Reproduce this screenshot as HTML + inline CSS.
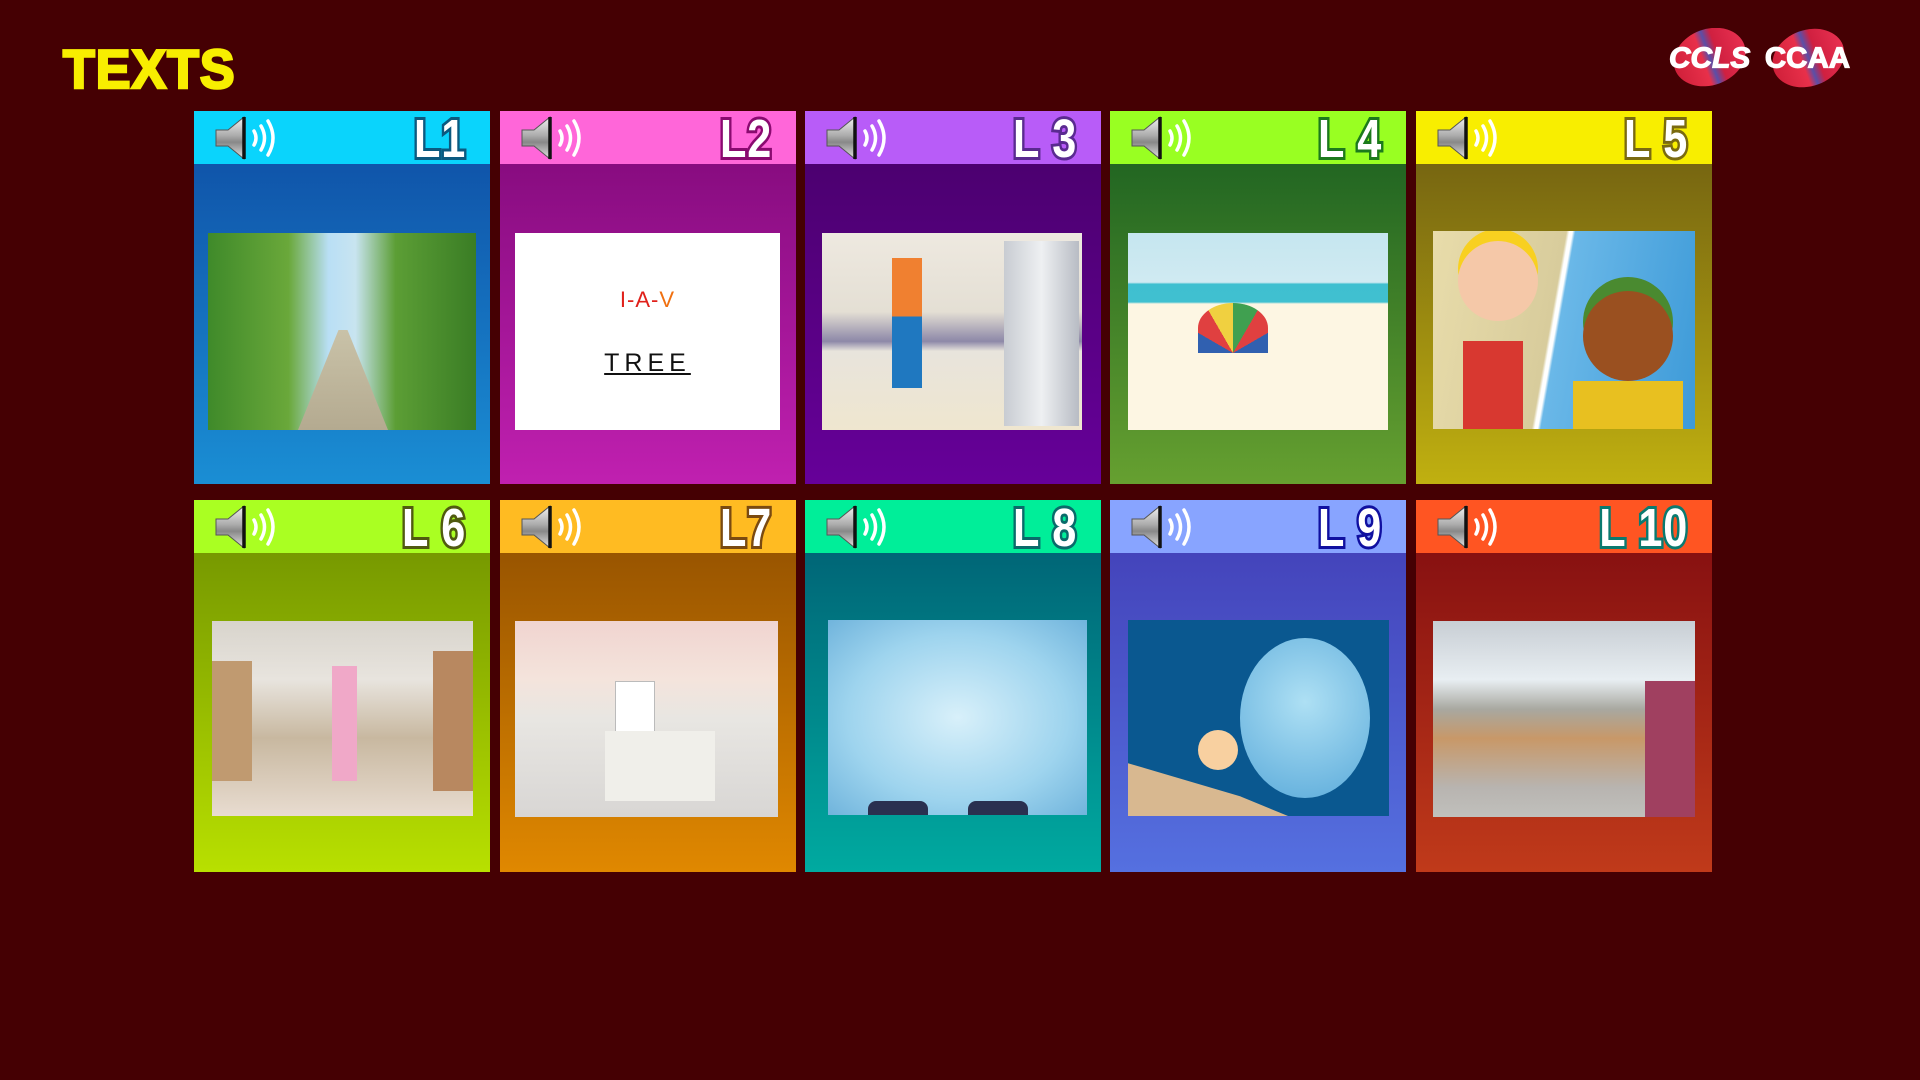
<!DOCTYPE html>
<html><head><meta charset="utf-8">
<style>
*{margin:0;padding:0;box-sizing:border-box}
body{width:1920px;height:1080px;background:#450003;position:relative;overflow:hidden;font-family:"Liberation Sans",sans-serif}
.title{position:absolute;left:63px;top:40px;font-size:52px;font-weight:bold;color:#f8ee00;letter-spacing:1px;-webkit-text-stroke:2.5px #f8ee00;transform:scaleY(1.05)}
.card{position:absolute;width:296px}
.hd{height:53px;position:relative}
.bd{position:absolute;top:53px;left:0;right:0;bottom:0}
.spk{position:absolute;left:20px;top:4px}
.lab{position:absolute;right:24px;top:-3px;font-size:54px;font-weight:bold;color:#fff;transform:scaleX(0.8);transform-origin:right center;letter-spacing:1px;paint-order:stroke fill;-webkit-text-stroke:6px var(--c)}
.img{position:absolute;overflow:hidden}
.logo{position:absolute;top:28px;height:62px}
</style></head><body>
<div class="title">TEXTS</div>

<svg class="logo" style="left:1660px" width="200" height="64" viewBox="0 0 200 64">
<defs><linearGradient id="rb" x1="0" x2="1"><stop offset="0" stop-color="#d0203a"/><stop offset="0.4" stop-color="#e8304a"/><stop offset="0.5" stop-color="#5a4fa8"/><stop offset="0.62" stop-color="#d02040"/><stop offset="1" stop-color="#e83050"/></linearGradient></defs>
<ellipse cx="48" cy="30" rx="38" ry="29" fill="url(#rb)" transform="rotate(-20 48 30)"/>
<ellipse cx="150" cy="31" rx="38" ry="29" fill="url(#rb)" transform="rotate(-20 150 31)"/>
<text x="6" y="41" font-family="Liberation Sans" font-weight="bold" font-style="italic" font-size="30" fill="#fff" stroke="#fff" stroke-width="1.2" textLength="84" lengthAdjust="spacingAndGlyphs">CCLS</text>
<text x="105" y="41" font-family="Liberation Sans" font-weight="bold" font-size="30" fill="#fff" stroke="#fff" stroke-width="1.2" textLength="88" lengthAdjust="spacingAndGlyphs">CCAA</text>
</svg>

<svg width="0" height="0" style="position:absolute">
<defs>
<linearGradient id="sg" x1="0" y1="0" x2="0" y2="1"><stop offset="0" stop-color="#f4f4f4"/><stop offset="0.45" stop-color="#aaa"/><stop offset="0.6" stop-color="#888"/><stop offset="1" stop-color="#e4e4e4"/></linearGradient>
<symbol id="speaker" viewBox="0 0 66 46">
<path d="M2 15 H14 L30 2 V44 L14 31 H2 Z" fill="url(#sg)" stroke="#555" stroke-width="1"/>
<path d="M30 2 V44" stroke="#111" stroke-width="3.5"/>
<path d="M40 16 Q44 23 40 30" stroke="#fff" stroke-width="3.5" fill="none" stroke-linecap="round"/>
<path d="M47 11 Q54 23 47 35" stroke="#fff" stroke-width="3.5" fill="none" stroke-linecap="round"/>
<path d="M54 6 Q64 23 54 40" stroke="#fff" stroke-width="3.5" fill="none" stroke-linecap="round"/>
</symbol>
</defs></svg>

<!-- Row 1 -->
<div class="card" style="left:194px;top:111px;height:373px">
<div class="hd" style="background:#0ad4fc"><svg class="spk" width="66" height="46"><use href="#speaker"/></svg><div class="lab" style="--c:#0b5a80">L1</div></div>
<div class="bd" style="background:linear-gradient(#1055aa,#1a8ed4)"></div>
<div class="img" style="left:14px;top:122px;width:268px;height:197px;background:linear-gradient(90deg,#3f8a2a 0%,#6aa83a 30%,#b9dff5 45%,#c8e4f0 55%,#5c9e35 70%,#3a7d25 100%)"><div style="position:absolute;left:90px;bottom:0;width:90px;height:100px;background:linear-gradient(#c9c2a8,#b4aa90);clip-path:polygon(45% 0,55% 0,100% 100%,0 100%)"></div></div>
</div>
<div class="card" style="left:500px;top:111px;height:373px">
<div class="hd" style="background:#ff66d9"><svg class="spk" width="66" height="46"><use href="#speaker"/></svg><div class="lab" style="--c:#8a0a70">L2</div></div>
<div class="bd" style="background:linear-gradient(#880c80,#c020b0)"></div>
<div class="img" style="left:15px;top:122px;width:265px;height:197px;background:#fff;text-align:center">
<div style="margin-top:54px;font-size:22px;color:#e0201a;letter-spacing:1px">I-A-<span style="color:#f07010">V</span></div>
<div style="margin-top:36px;font-size:25px;color:#111;letter-spacing:5px;text-decoration:underline">TREE</div>
</div>
</div>
<div class="card" style="left:805px;top:111px;height:373px">
<div class="hd" style="background:#b85cf8"><svg class="spk" width="66" height="46"><use href="#speaker"/></svg><div class="lab" style="--c:#5a2a90">L 3</div></div>
<div class="bd" style="background:linear-gradient(#4c0070,#660099)"></div>
<div class="img" style="left:17px;top:122px;width:260px;height:197px;background:linear-gradient(#eee9e0 0%,#e4dfd4 40%,#8d88a8 55%,#e8e4dc 60%,#efe6cf 100%)"><div style="position:absolute;right:3px;top:8px;width:75px;height:185px;background:linear-gradient(90deg,#c8ccd2,#eef0f2,#b8bcc4)"></div><div style="position:absolute;left:70px;top:25px;width:30px;height:130px;background:linear-gradient(#f08030 0 45%,#1f78c0 45%)"></div></div>
</div>
<div class="card" style="left:1110px;top:111px;height:373px">
<div class="hd" style="background:#99ff22"><svg class="spk" width="66" height="46"><use href="#speaker"/></svg><div class="lab" style="--c:#1c7a1c">L 4</div></div>
<div class="bd" style="background:linear-gradient(#226622,#66a030)"></div>
<div class="img" style="left:18px;top:122px;width:260px;height:197px;background:linear-gradient(#c5e6ef 0%,#d0eaf2 25%,#3fbfd0 26%,#40c0d0 35%,#fdf6e3 36%)"><div style="position:absolute;left:70px;top:70px;width:70px;height:50px;border-radius:50% 50% 0 0;background:conic-gradient(from 270deg at 50% 100%,#3060b0 0 30deg,#e04040 0 60deg,#f0d040 0 90deg,#40a050 0 120deg,#e04040 0 150deg,#3060b0 0 180deg,transparent 0)"></div></div>
</div>
<div class="card" style="left:1416px;top:111px;height:373px">
<div class="hd" style="background:#f8ee00"><svg class="spk" width="66" height="46"><use href="#speaker"/></svg><div class="lab" style="--c:#7a6a10">L 5</div></div>
<div class="bd" style="background:linear-gradient(#776611,#c0b010)"></div>
<div class="img" style="left:17px;top:120px;width:262px;height:198px;background:linear-gradient(100deg,#e8dcaa 0%,#d8cc9c 45%,#fff 46%,#fff 47%,#6ab8e8 48%,#3d9ad8 100%)"><div style="position:absolute;left:25px;top:10px;width:80px;height:80px;border-radius:50%;background:#f5c8a8;box-shadow:0 -12px 0 #f8d020"></div><div style="position:absolute;left:30px;top:110px;width:60px;height:88px;background:#d83830"></div><div style="position:absolute;left:150px;top:60px;width:90px;height:90px;border-radius:50%;background:#9a5020;box-shadow:0 -14px 0 #4a8a30"></div><div style="position:absolute;left:140px;top:150px;width:110px;height:48px;background:#e8c020"></div></div>
</div>

<!-- Row 2 -->
<div class="card" style="left:194px;top:500px;height:372px">
<div class="hd" style="background:#aaff22"><svg class="spk" width="66" height="46"><use href="#speaker"/></svg><div class="lab" style="--c:#505a10">L 6</div></div>
<div class="bd" style="background:linear-gradient(#779900,#b8e000)"></div>
<div class="img" style="left:18px;top:121px;width:261px;height:195px;background:linear-gradient(#d8d4cc 0%,#e8e4de 30%,#c8b8a0 60%,#e8dcd0 100%)"><div style="position:absolute;left:0;top:40px;width:40px;height:120px;background:#c09a70"></div><div style="position:absolute;right:0;top:30px;width:40px;height:140px;background:#b88860"></div><div style="position:absolute;left:120px;top:45px;width:25px;height:115px;background:#f0a8c8"></div></div>
</div>
<div class="card" style="left:500px;top:500px;height:372px">
<div class="hd" style="background:#ffbb22"><svg class="spk" width="66" height="46"><use href="#speaker"/></svg><div class="lab" style="--c:#7a4a10">L7</div></div>
<div class="bd" style="background:linear-gradient(#995500,#e08800)"></div>
<div class="img" style="left:15px;top:121px;width:263px;height:196px;background:linear-gradient(#f0d4d0 0%,#f4e4dc 30%,#e8e6e2 50%,#d8d6d4 100%)"><div style="position:absolute;left:100px;top:60px;width:40px;height:100px;background:#fff;border:1px solid #bbb"></div><div style="position:absolute;left:90px;top:110px;width:110px;height:70px;background:#f0efea"></div></div>
</div>
<div class="card" style="left:805px;top:500px;height:372px">
<div class="hd" style="background:#00ee99"><svg class="spk" width="66" height="46"><use href="#speaker"/></svg><div class="lab" style="--c:#0a6a6a">L 8</div></div>
<div class="bd" style="background:linear-gradient(#006677,#00aaa0)"></div>
<div class="img" style="left:23px;top:120px;width:259px;height:195px;background:radial-gradient(ellipse at center,#d8f0fa 0%,#9ed4ee 60%,#70b4dc 100%)"><div style="position:absolute;left:40px;bottom:0;width:60px;height:14px;background:#2a3050;border-radius:8px 8px 0 0"></div><div style="position:absolute;left:140px;bottom:0;width:60px;height:14px;background:#2a3050;border-radius:8px 8px 0 0"></div></div>
</div>
<div class="card" style="left:1110px;top:500px;height:372px">
<div class="hd" style="background:#88a4ff"><svg class="spk" width="66" height="46"><use href="#speaker"/></svg><div class="lab" style="--c:#1010a0">L 9</div></div>
<div class="bd" style="background:linear-gradient(#4444bb,#5570e0)"></div>
<div class="img" style="left:18px;top:120px;width:261px;height:196px;background:#0a5890"><div style="position:absolute;left:112px;top:18px;width:130px;height:160px;border-radius:50%;background:radial-gradient(circle at 50% 40%,#aee0f4,#5aaada);"></div><div style="position:absolute;left:0;top:130px;width:160px;height:66px;background:#d8b890;clip-path:polygon(0 20%,70% 70%,100% 100%,0 100%)"></div><div style="position:absolute;left:70px;top:110px;width:40px;height:40px;border-radius:50%;background:#f8d0a0"></div></div>
</div>
<div class="card" style="left:1416px;top:500px;height:372px">
<div class="hd" style="background:#ff5522"><svg class="spk" width="66" height="46"><use href="#speaker"/></svg><div class="lab" style="--c:#0a7a70">L 10</div></div>
<div class="bd" style="background:linear-gradient(#881111,#c03a1a)"></div>
<div class="img" style="left:17px;top:121px;width:262px;height:196px;background:linear-gradient(#c8ced4 0%,#e8eef2 30%,#a8a8a0 45%,#c89868 60%,#b8b4b0 85%,#c0c0bc 100%)"><div style="position:absolute;right:0;top:60px;width:50px;height:136px;background:#a04060"></div></div>
</div>
</body></html>
